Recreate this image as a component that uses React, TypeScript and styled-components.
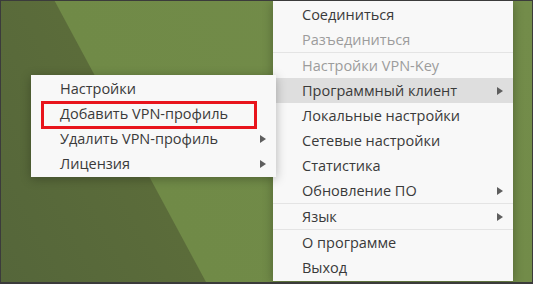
import styled, { createGlobalStyle } from "styled-components";

const GlobalStyle = createGlobalStyle`
  html, body {
    margin: 0;
    padding: 0;
    background: #3a3a3a;
  }
  * {
    box-sizing: border-box;
  }
`;

const Desktop = styled.div`
  position: relative;
  width: 533px;
  height: 284px;
  overflow: hidden;
  border-style: solid;
  border-color: #3b3b3b;
  border-width: 1px 1px 2px 1px;
  background: linear-gradient(
    61.7deg,
    #55663a 0px,
    #5b6c3a 180px,
    #708a47 181px,
    #738c4a 100%
  );
  font-family: "Open Sans", "Noto Sans", sans-serif;
  font-size: 14.5px;
  color: #3c3c3c;
`;

const Menu = styled.ul<{ $left: number; $top: number; $width: number }>`
  position: absolute;
  left: ${(p) => p.$left}px;
  top: ${(p) => p.$top}px;
  width: ${(p) => p.$width}px;
  margin: 0;
  padding: 1px 0 1px;
  list-style: none;
  background: #f8f8f8;
  box-shadow: 0 2px 10px rgba(0, 0, 0, 0.28);
`;

const Item = styled.li<{ $disabled?: boolean; $active?: boolean; $marked?: boolean; $indent: number }>`
  position: relative;
  height: 25px;
  display: flex;
  align-items: center;
  justify-content: space-between;
  padding: 0 10px 0 ${(p) => p.$indent}px;
  white-space: nowrap;
  color: ${(p) => (p.$disabled ? "#9c9c9c" : "#3a3a3a")};
  background: ${(p) => (p.$active ? "#dedede" : "transparent")};

  ${(p) =>
    p.$marked &&
    `
    &::after {
      content: "";
      position: absolute;
      left: 10px;
      right: 19px;
      top: 0;
      bottom: -3px;
      border: 3px solid #e8141c;
    }
  `}
`;

const Separator = styled.li`
  height: 1px;
  background: #e4e4e4;
`;

const Arrow = styled.span`
  width: 0;
  height: 0;
  border-top: 4.5px solid transparent;
  border-bottom: 4.5px solid transparent;
  border-left: 6px solid #5e5e5e;
`;

type Entry =
  | { sep: true }
  | { label: string; sub?: boolean; disabled?: boolean; active?: boolean; marked?: boolean };

const mainMenu: Entry[] = [
  { label: "Соединиться" },
  { label: "Разъединиться", disabled: true },
  { sep: true },
  { label: "Настройки VPN-Key", disabled: true },
  { label: "Программный клиент", sub: true, active: true },
  { label: "Локальные настройки" },
  { label: "Сетевые настройки" },
  { label: "Статистика" },
  { label: "Обновление ПО", sub: true },
  { sep: true },
  { label: "Язык", sub: true },
  { sep: true },
  { label: "О программе" },
  { label: "Выход" },
];

const clientMenu: Entry[] = [
  { label: "Настройки" },
  { label: "Добавить VPN-профиль", marked: true },
  { label: "Удалить VPN-профиль", sub: true },
  { label: "Лицензия", sub: true },
];

const renderEntries = (entries: Entry[], indent: number) =>
  entries.map((e, i) =>
    "sep" in e ? (
      <Separator key={i} />
    ) : (
      <Item
        key={i}
        $indent={indent}
        $disabled={e.disabled}
        $active={e.active}
        $marked={e.marked}
      >
        <span>{e.label}</span>
        {e.sub && <Arrow />}
      </Item>
    )
  );

const App = () => {
  return (
    <>
      <GlobalStyle />
      <Desktop>
        <Menu $left={272} $top={0} $width={240}>
          {renderEntries(mainMenu, 29)}
        </Menu>
        <Menu $left={30} $top={74} $width={245}>
          {renderEntries(clientMenu, 29)}
        </Menu>
      </Desktop>
    </>
  );
};

export default App;
